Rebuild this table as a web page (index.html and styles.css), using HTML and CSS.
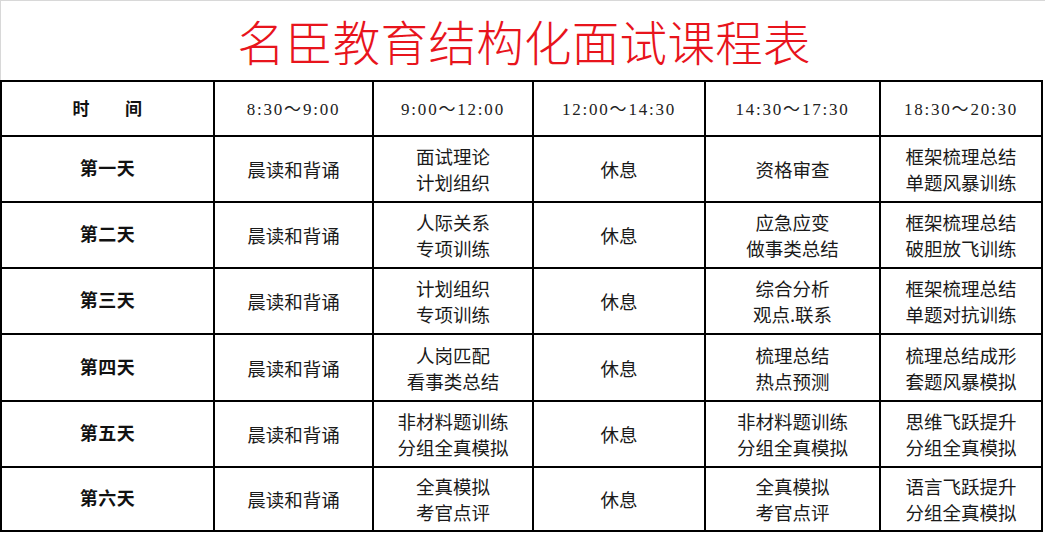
FILE: index.html
```html
<!DOCTYPE html>
<html lang="zh-CN">
<head>
<meta charset="utf-8">
<title>名臣教育结构化面试课程表</title>
<link rel="stylesheet" href="styles.css">
</head>
<body>
<div class="page">
  <header class="title-bar"><h1 class="title">名臣教育结构化面试课程表</h1></header>
  <div class="grid">
    <div class="cell head label">时　　间</div>
    <div class="cell head time">8:30～9:00</div>
    <div class="cell head time">9:00～12:00</div>
    <div class="cell head time">12:00～14:30</div>
    <div class="cell head time">14:30～17:30</div>
    <div class="cell head time">18:30～20:30</div>

    <div class="cell label">第一天</div>
    <div class="cell">晨读和背诵</div>
    <div class="cell">面试理论<br>计划组织</div>
    <div class="cell">休息</div>
    <div class="cell">资格审查</div>
    <div class="cell">框架梳理总结<br>单题风暴训练</div>

    <div class="cell label">第二天</div>
    <div class="cell">晨读和背诵</div>
    <div class="cell">人际关系<br>专项训练</div>
    <div class="cell">休息</div>
    <div class="cell">应急应变<br>做事类总结</div>
    <div class="cell">框架梳理总结<br>破胆放飞训练</div>

    <div class="cell label">第三天</div>
    <div class="cell">晨读和背诵</div>
    <div class="cell">计划组织<br>专项训练</div>
    <div class="cell">休息</div>
    <div class="cell">综合分析<br>观点.联系</div>
    <div class="cell">框架梳理总结<br>单题对抗训练</div>

    <div class="cell label">第四天</div>
    <div class="cell">晨读和背诵</div>
    <div class="cell">人岗匹配<br>看事类总结</div>
    <div class="cell">休息</div>
    <div class="cell">梳理总结<br>热点预测</div>
    <div class="cell">梳理总结成形<br>套题风暴模拟</div>

    <div class="cell label">第五天</div>
    <div class="cell">晨读和背诵</div>
    <div class="cell">非材料题训练<br>分组全真模拟</div>
    <div class="cell">休息</div>
    <div class="cell">非材料题训练<br>分组全真模拟</div>
    <div class="cell">思维飞跃提升<br>分组全真模拟</div>

    <div class="cell label">第六天</div>
    <div class="cell">晨读和背诵</div>
    <div class="cell">全真模拟<br>考官点评</div>
    <div class="cell">休息</div>
    <div class="cell">全真模拟<br>考官点评</div>
    <div class="cell">语言飞跃提升<br>分组全真模拟</div>
  </div>
</div>
</body>
</html>
```

FILE: styles.css
```css
html, body {
  margin: 0;
  padding: 0;
  background: #ffffff;
}

.page {
  width: 1045px;
  height: 533px;
  overflow: hidden;
  display: flex;
  flex-direction: column;
}

.title-bar {
  height: 80px;
  border-top: 1px solid #d8d8d8;
  border-left: 1px solid #d8d8d8;
  display: flex;
  align-items: center;
  justify-content: center;
  padding-left: 2px;
  box-sizing: border-box;
}

.title {
  margin: 0;
  padding-top: 0;
  font-family: "Noto Sans CJK SC", sans-serif;
  font-weight: 300;
  font-size: 47.5px;
  line-height: 1;
  color: #e8141c;
  letter-spacing: 0.3px;
}

.grid {
  width: 1043px;
  box-sizing: border-box;
  background: #000;
  padding: 2px;
  display: grid;
  grid-template-columns: 211px 157px 158px 170px 173px 160px;
  grid-template-rows: 53px 64px 64px 64px 65px 64px 62px;
  gap: 2px;
}

.cell {
  background: #fff;
  display: flex;
  align-items: center;
  justify-content: center;
  text-align: center;
  font-family: "Noto Sans CJK SC", sans-serif;
  font-size: 18.5px;
  line-height: 26px;
  color: #1a1a1a;
}

.label {
  font-family: "Liberation Serif", "Noto Sans CJK SC", serif;
  font-weight: bold;
  font-size: 18px;
  color: #111;
  letter-spacing: 0.5px;
}

.head {
  padding-top: 2px;
}

.head.label {
  font-size: 17px;
}

.time {
  font-family: "Liberation Serif", "Noto Sans CJK SC", serif;
  font-size: 17px;
  color: #222;
  letter-spacing: 1.8px;
}
```
